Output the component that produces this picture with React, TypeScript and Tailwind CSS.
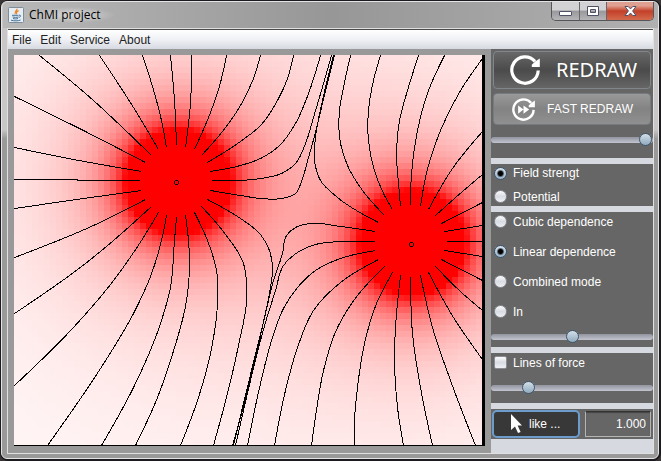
import { useId, useState } from "react";
import type { ReactNode } from "react";

type Point = [number, number];

const CELL = 6;
const COLUMNS = 78;
const ROWS = 65;
const ORIGIN: Point = [14, 55];
const CHARGES: Point[] = [
  [178, 182],
  [413, 243],
];
const STRENGTH = 670000;

const LINES: Point[][] = [
  [[166, 147], [161, 120], [152, 86], [142, 55]],
  [[158, 149], [133, 107], [99, 55]],
  [[151, 155], [122, 127], [93, 100], [39, 55]],
  [[145, 162], [75, 126], [14, 96]],
  [[141, 171], [73, 159], [14, 147]],
  [[140, 180], [14, 179]],
  [[141, 190], [83, 198], [14, 208]],
  [[145, 199], [93, 225], [14, 257]],
  [[151, 206], [113, 240], [85, 263], [14, 313]],
  [[158, 212], [141, 240], [110, 284], [72, 328], [14, 385]],
  [[166, 215], [161, 240], [150, 276], [133, 313], [100, 368], [47, 445]],
  [[176, 217], [174, 240], [170, 287], [160, 323], [133, 387], [101, 445]],
  [[185, 215], [188, 240], [189, 267], [186, 300], [170, 360], [157, 397], [135, 445]],
  [[194, 212], [207, 240], [216, 270], [217, 303], [210, 353], [197, 400], [180, 445]],
  [[201, 206], [222, 230], [243, 263], [246, 300], [238, 345], [228, 389], [213, 445]],
  [[207, 199], [240, 218], [260, 234], [269, 250], [272, 270], [270, 287], [264, 317], [255, 357], [242, 410], [232, 445]],
  [[210, 190], [240, 195], [260, 198], [281, 198], [295, 193], [302, 178], [308, 157], [315, 132], [325, 90], [334, 55]],
  [[212, 180], [240, 180], [260, 178], [281, 173], [295, 163], [305, 143], [313, 117], [323, 83], [331, 55]],
  [[210, 171], [240, 165], [260, 158], [280, 144], [295, 123], [308, 93], [320, 55]],
  [[207, 162], [240, 141], [260, 125], [277, 100], [287, 78], [293, 55]],
  [[201, 155], [222, 131], [240, 105], [253, 78], [260, 55]],
  [[194, 149], [210, 112], [220, 82], [226, 55]],
  [[185, 147], [190, 103], [191, 55]],
  [[176, 145], [174, 100], [170, 55]],
  [[446, 241], [482, 241]],
  [[444, 231], [482, 225]],
  [[441, 223], [482, 202]],
  [[435, 215], [462, 191], [482, 174]],
  [[428, 209], [452, 168], [482, 131]],
  [[420, 206], [425, 177], [440, 130], [460, 90], [482, 58]],
  [[410, 205], [411, 173], [417, 130], [428, 90], [444, 55]],
  [[400, 206], [398, 183], [396, 153], [399, 120], [407, 90], [418, 55]],
  [[392, 209], [383, 193], [373, 167], [368, 140], [368, 110], [373, 80], [380, 55]],
  [[384, 215], [362, 190], [347, 165], [340, 143], [339, 110], [343, 87], [350, 55]],
  [[378, 222], [337, 197], [320, 180], [314, 160], [315, 137], [322, 100], [333, 55]],
  [[375, 231], [340, 226], [310, 223], [295, 227], [286, 235], [282, 253], [273, 280], [265, 313], [242, 407], [233, 445]],
  [[375, 241], [340, 241], [315, 244], [297, 252], [283, 265], [275, 290], [265, 322], [243, 410], [235, 445]],
  [[375, 250], [340, 258], [315, 270], [297, 287], [283, 308], [272, 337], [260, 383], [247, 445]],
  [[378, 259], [340, 282], [313, 310], [297, 347], [285, 390], [274, 445]],
  [[384, 266], [357, 295], [337, 327], [323, 370], [317, 403], [311, 445]],
  [[392, 272], [376, 303], [364, 343], [357, 387], [354, 420], [354, 445]],
  [[400, 275], [395, 327], [394, 363], [397, 407], [403, 445]],
  [[410, 277], [412, 333], [420, 387], [432, 445]],
  [[420, 275], [432, 327], [450, 380], [475, 445]],
  [[428, 272], [453, 317], [482, 359]],
  [[435, 266], [461, 292], [482, 310]],
  [[441, 259], [482, 280]],
  [[444, 250], [482, 256]],
];

/** Smooth curve through the points of one line of force, tangents weighted by chord length. */
function curve(points: Point[]): string {
  const last = points.length - 1;
  const lengths = points.slice(1).map((p, i) => Math.hypot(p[0] - points[i][0], p[1] - points[i][1]));
  const slope = (i: number, axis: 0 | 1) => (points[i + 1][axis] - points[i][axis]) / lengths[i];
  const inner = (i: number, axis: 0 | 1) =>
    (slope(i - 1, axis) * lengths[i] + slope(i, axis) * lengths[i - 1]) / (lengths[i - 1] + lengths[i]);
  const tangent = (i: number, axis: 0 | 1): number => {
    if (last === 1) return slope(0, axis);
    if (i === 0) return (3 * slope(0, axis) - inner(1, axis)) / 2;
    if (i === last) return (3 * slope(last - 1, axis) - inner(last - 1, axis)) / 2;
    return inner(i, axis);
  };
  let d = `M${points[0][0] + 0.5} ${points[0][1] + 0.5}`;
  for (let i = 0; i < last; i++) {
    const reach = lengths[i] / 3;
    const [b, c] = [points[i], points[i + 1]];
    d += `C${b[0] + tangent(i, 0) * reach + 0.5} ${b[1] + tangent(i, 1) * reach + 0.5} `;
    d += `${c[0] - tangent(i + 1, 0) * reach + 0.5} ${c[1] - tangent(i + 1, 1) * reach + 0.5} `;
    d += `${c[0] + 0.5} ${c[1] + 0.5}`;
  }
  return d;
}

function cellColor(column: number, row: number): string {
  const x = ORIGIN[0] + (column + 0.5) * CELL;
  const y = ORIGIN[1] + (row + 0.5) * CELL;
  const field = CHARGES.reduce(
    (sum, [cx, cy]) => sum + STRENGTH / Math.max((x - cx) ** 2 + (y - cy) ** 2, 1),
    0,
  );
  const level = Math.round(Math.max(0, 255 - field));
  return `rgb(255,${level},${level})`;
}

function FieldPlot() {
  const cells: ReactNode[] = [];
  for (let row = 0; row < ROWS; row++) {
    for (let column = 0; column < COLUMNS; column++) {
      cells.push(
        <rect
          key={`${column}-${row}`}
          x={ORIGIN[0] + column * CELL}
          y={ORIGIN[1] + row * CELL}
          width={CELL}
          height={CELL}
          fill={cellColor(column, row)}
        />,
      );
    }
  }
  return (
    <svg
      viewBox="14 55 471 391"
      preserveAspectRatio="none"
      className="block aspect-[471/391] w-full bg-black"
      shapeRendering="crispEdges"
      role="img"
      aria-label="Field strength"
    >
      {cells}
      <g fill="none" stroke="#000" strokeWidth="1">
        {LINES.map((points, i) => (
          <path key={i} d={curve(points)} />
        ))}
        <path d="M175 180.5h3M175 184.5h3M174.5 181v3M178.5 181v3" />
        <path d="M410 242.5h3M410 246.5h3M409.5 243v3M413.5 243v3" />
      </g>
      <path d="M482 55h3v391H14v-1h468z" fill="#000" />
    </svg>
  );
}

function JavaIcon() {
  return (
    <svg viewBox="0 0 16 16" className="size-4" aria-hidden="true">
      <rect x="0.5" y="0.5" width="15" height="15" rx="1" fill="#e6edf3" stroke="#7d8d9b" />
      <path d="M8.9 1.6c1 1.7-3.2 2.9-1.7 5.6M10.6 3.6c-2 .9-2.8 1.9-1.8 3.7" fill="none" stroke="#e8852c" strokeWidth="1.2" />
      <path d="M4 8.3h6.5M4.6 9.9c1.6.6 4.2.6 5.9 0M5 11.5c1.5.5 3.6.5 5 0M3 13.2c3 .9 7 .9 9.6-.2M11 8.2c2.3-.4 2.1 1.8-.2 2.3" fill="none" stroke="#40719b" strokeWidth="1" />
    </svg>
  );
}

function RedrawIcon({ fast = false }: { fast?: boolean }) {
  return (
    <svg viewBox="0 0 30 30" className={fast ? "size-[23px]" : "size-[30px]"} aria-hidden="true">
      <path d="M28.2 15.5A13.2 13.2 0 1 1 25 6.4" fill="none" stroke="#fff" strokeWidth="3.2" />
      <path d="M29.8 3.4v8.7h-8V9.8l3.4-3.2z" fill="#fff" />
      {fast && <path d="M8 9.8l7 5.3-7 5.3zM15 9.8l7.4 5.3-7.4 5.3z" fill="#fff" />}
    </svg>
  );
}

function Slider({ label, initial }: { label: string; initial: number }) {
  const [value, setValue] = useState(initial);
  return (
    <input
      type="range"
      aria-label={label}
      value={value}
      onChange={(e) => setValue(Number(e.target.value))}
      className="block h-[13px] w-full appearance-none bg-transparent [&::-webkit-slider-runnable-track]:h-[6px] [&::-webkit-slider-runnable-track]:rounded-full [&::-webkit-slider-runnable-track]:bg-linear-to-b [&::-webkit-slider-runnable-track]:from-[#92959f] [&::-webkit-slider-runnable-track]:to-[#c2c5d0] [&::-webkit-slider-thumb]:-mt-1 [&::-webkit-slider-thumb]:size-[13px] [&::-webkit-slider-thumb]:appearance-none [&::-webkit-slider-thumb]:rounded-full [&::-webkit-slider-thumb]:border [&::-webkit-slider-thumb]:border-[#42576c] [&::-webkit-slider-thumb]:bg-linear-to-b [&::-webkit-slider-thumb]:from-[#d3dfe9] [&::-webkit-slider-thumb]:to-[#90aabe]"
    />
  );
}

function Radio({ name, label, checked = false }: { name: string; label: string; checked?: boolean }) {
  const id = useId();
  return (
    <div className="flex h-[19px] items-center gap-[6px] pl-[3px]">
      <input
        id={id}
        type="radio"
        name={name}
        defaultChecked={checked}
        className="size-[13px] appearance-none rounded-full border border-[#8b8d94] bg-linear-to-b from-[#fafafb] via-[#d9dce3] to-[#eef0f5] checked:border-[#42576c] checked:bg-[radial-gradient(circle,#000_0,#000_2px,transparent_4px),linear-gradient(#d5e2ed,#98b2c8)]"
      />
      <label htmlFor={id}>{label}</label>
    </div>
  );
}

export default function App() {
  const linesId = useId();
  return (
    <div className="min-h-screen bg-[#3a3638] font-['Liberation_Sans',Arial,sans-serif] text-xs">
      <div className="flex min-h-screen flex-col rounded-lg border border-[#1c1a1e] bg-[#1c1a1e] pr-px pb-px">
        <div className="flex flex-1 flex-col rounded-md border border-[#e4e4e4] bg-linear-to-b from-[#c8c6c6] from-28% via-[#9a9a9a] via-30% to-[#999] pr-1 pb-1 pl-[5px]">
          <header className="-mx-1 flex h-[26px] items-center justify-between rounded-t-[5px] bg-linear-to-r from-[#b8b8b8] via-[#979797] to-[#b0b0b0] px-1">
            <div className="flex items-center gap-[5px] pl-px">
              <JavaIcon />
              <h1 className="bg-[radial-gradient(closest-side,#d8d8d8,transparent)] pr-4 font-['Open_Sans',sans-serif] text-xs text-black">ChMI project</h1>
            </div>
            <div className="flex h-[19px] self-start overflow-hidden rounded-b-[5px] border border-t-0 border-[#55555a]">
              <button type="button" aria-label="Minimize" className="flex w-7 items-center justify-center border-r border-[#66666c] bg-linear-to-b from-[#d2d2d4] from-45% via-[#99999c] via-50% to-[#b5b5b8]">
                <svg width="13" height="16" viewBox="0 0 13 16"><rect x="0.5" y="8.5" width="12" height="4" rx="0.5" fill="#fff" stroke="#4f5166" /></svg>
              </button>
              <button type="button" aria-label="Maximize" className="flex w-[27px] items-center justify-center border-r border-[#66666c] bg-linear-to-b from-[#d2d2d4] from-45% via-[#99999c] via-50% to-[#b5b5b8]">
                <svg width="12" height="16" viewBox="0 0 12 16"><path d="M.5 3.5h11v9H.5zM3.5 6.5v3h5v-3z" fill="#fff" fillRule="evenodd" stroke="#4f5166" /></svg>
              </button>
              <button type="button" aria-label="Close" className="flex w-[46px] items-center justify-center bg-linear-to-b from-[#dfa091] from-20% via-[#c33f28] via-50% to-[#d36a4c]">
                <svg width="13" height="16" viewBox="0 0 13 16"><path d="M1 3.5h3.2l2.3 2.4 2.3-2.4H12L8.6 8l3.4 4.5H8.8l-2.3-2.4-2.3 2.4H1L4.4 8z" fill="#fff" stroke="#4f5166" /></svg>
              </button>
            </div>
          </header>

          <div className="flex flex-1 flex-col border border-[#e0e0e0] bg-[#4a4a4a] pt-px">
            <nav className="flex h-[19px] items-center gap-[9px] bg-linear-to-b from-white via-[#f0f1f5] to-[#d6d9e0] pl-1 text-[#222]">
              <button type="button">File</button>
              <button type="button">Edit</button>
              <button type="button">Service</button>
              <button type="button">About</button>
            </nav>

            <main className="flex flex-1">
              <div className="min-w-0 flex-1 bg-[#999] p-[6px]">
                <FieldPlot />
              </div>

              <aside className="flex w-[162px] shrink-0 flex-col gap-[6px] bg-[#d6d9e0] text-white">
                <section className="flex flex-col bg-[#666] pt-[2px] pb-3">
                  <div className="flex flex-col gap-1 px-[2px]">
                    <button type="button" className="flex h-[38px] items-center gap-4 rounded-[4px] border border-[#80868c] bg-linear-to-b from-[#686868] via-[#4b4b4b] to-[#666] pl-4 font-['Noto_Sans',sans-serif] text-xl">
                      <RedrawIcon />
                      REDRAW
                    </button>
                    <button type="button" className="flex h-8 items-center gap-3 rounded-[4px] border border-[#777b80] bg-linear-to-b from-[#999] via-[#838383] to-[#909090] pl-[18px]">
                      <RedrawIcon fast />
                      FAST REDRAW
                    </button>
                  </div>
                  <div className="pt-2">
                    <Slider label="Redraw quality" initial={99} />
                  </div>
                </section>

                <section className="flex h-[42px] flex-col gap-[5px] bg-[#666]">
                  <Radio name="quantity" label="Field strengt" checked />
                  <Radio name="quantity" label="Potential" />
                </section>

                <section className="bg-[#666] pb-1">
                  <div className="flex flex-col gap-[11px]">
                    <Radio name="mode" label="Cubic dependence" />
                    <Radio name="mode" label="Linear dependence" checked />
                    <Radio name="mode" label="Combined mode" />
                    <Radio name="mode" label="In" />
                  </div>
                  <div className="pt-[9px]">
                    <Slider label="Dependence scale" initial={50} />
                  </div>
                </section>

                <section className="bg-[#666] pb-[9px]">
                  <div className="flex h-[19px] items-center gap-[6px] pl-[3px]">
                    <input
                      id={linesId}
                      type="checkbox"
                      className="size-[13px] appearance-none rounded-[2px] border border-[#8b8d94] bg-linear-to-b from-[#fafafb] via-[#d9dce3] to-[#eef0f5] checked:bg-[#8fb0cc]"
                    />
                    <label htmlFor={linesId}>Lines of force</label>
                  </div>
                  <div className="pt-[9px]">
                    <Slider label="Number of lines" initial={21} />
                  </div>
                </section>

                <section className="flex h-[30px] items-center gap-[5px] bg-[#666] pr-[2px] pl-px">
                  <button type="button" className="flex h-7 w-[88px] items-center gap-[6px] rounded-[5px] border-2 border-[#6c9ccc] bg-[#383838] pl-4">
                    <svg width="13" height="20" viewBox="0 0 13 20" aria-hidden="true">
                      <path d="M1 0v16l4-3.6L8 19l2.6-1.1-3-6.4H12z" fill="#fff" />
                    </svg>
                    like ...
                  </button>
                  <input
                    type="text"
                    aria-label="Charge value"
                    defaultValue="1.000"
                    className="h-[26px] min-w-0 flex-1 border border-[#b5b5b5] border-t-[#333] bg-[#666] pr-1 text-right text-white shadow-[inset_0_1px_1px_#444]"
                  />
                </section>
              </aside>
            </main>
          </div>
        </div>
      </div>
    </div>
  );
}
